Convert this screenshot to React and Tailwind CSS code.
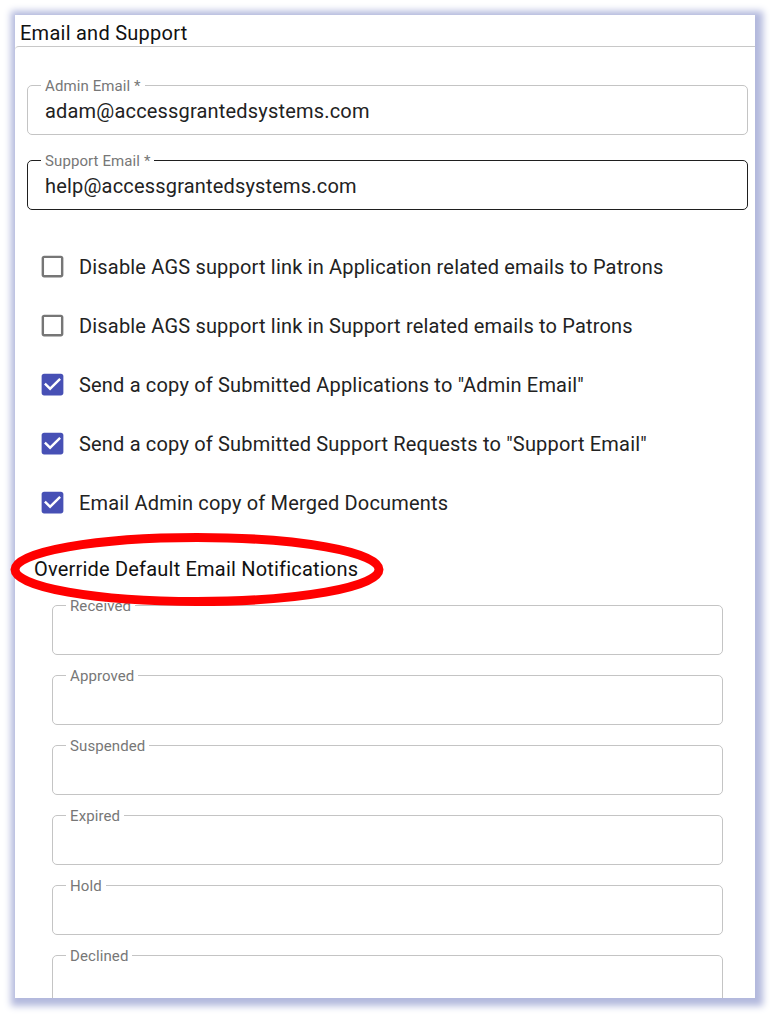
import React from 'react';

const font = { fontFamily: 'Roboto, "Liberation Sans", sans-serif' };

const checkedPath =
  'M19 3H5c-1.11 0-2 .9-2 2v14c0 1.1.89 2 2 2h14c1.11 0 2-.9 2-2V5c0-1.1-.89-2-2-2zm-9 14l-5-5 1.41-1.41L10 14.17l7.59-7.59L19 8l-9 9z';
const uncheckedPath =
  'M19 5v14H5V5h14m0-2H5c-1.1 0-2 .9-2 2v14c0 1.1.9 2 2 2h14c1.1 0 2-.9 2-2V5c0-1.1-.9-2-2-2z';

const options = [
  { label: 'Disable AGS support link in Application related emails to Patrons', checked: false },
  { label: 'Disable AGS support link in Support related emails to Patrons', checked: false },
  { label: 'Send a copy of Submitted Applications to "Admin Email"', checked: true },
  { label: 'Send a copy of Submitted Support Requests to "Support Email"', checked: true },
  { label: 'Email Admin copy of Merged Documents', checked: true },
];

const notifications = ['Received', 'Approved', 'Suspended', 'Expired', 'Hold', 'Declined'];

// outlined text field with the label sitting on the top border
const OutlinedField = ({ label, value, dark = false, className = '' }) => (
  <div
    className={`relative h-[50px] rounded-[5px] border ${dark ? 'border-[#1f1f1f]' : 'border-[#c4c4c4]'} ${className}`}
  >
    <span className="absolute left-[13px] top-0 -translate-y-1/2 bg-white px-[4px] text-[15px] leading-none tracking-[0.1px] text-[#777]">
      {label}
    </span>
    {value && (
      <div className="flex h-full items-center pl-[17px] pt-[1px] text-[20px] tracking-[0.18px] text-[#222]">{value}</div>
    )}
  </div>
);

const CheckRow = ({ label, checked }) => (
  <div className="flex h-[59px] items-center">
    <svg viewBox="0 0 24 24" className="ml-[23px] h-[29px] w-[29px] shrink-0">
      <path d={checked ? checkedPath : uncheckedPath} fill={checked ? '#4750b5' : '#767676'} />
    </svg>
    <span className="ml-[12px] text-[20px] tracking-[0.18px] text-[#222]">{label}</span>
  </div>
);

export default function App() {
  return (
    <div className="relative h-[1015px] w-[770px] overflow-hidden bg-white" style={font}>
      <div className="ml-[15px] mt-[15px] h-[983px] w-[740px] overflow-hidden bg-white shadow-[2px_2px_7px_6px_#b3b9dd]">
        <div className="flex h-[31px] items-end pb-[3px] pl-[5px] text-[20px] leading-none tracking-[0.25px] text-[#111]">
          Email and Support
        </div>
        <div className="rounded-tl-[4px] border-t border-[#c8c8c8] pb-[20px]">
          <div className="ml-[12px] mr-[7px] pt-[38px]">
            <OutlinedField label="Admin Email *" value="adam@accessgrantedsystems.com" />
            <OutlinedField label="Support Email *" value="help@accessgrantedsystems.com" dark className="mt-[25px]" />
          </div>

          <div className="mt-[27px]">
            {options.map((o) => (
              <CheckRow key={o.label} label={o.label} checked={o.checked} />
            ))}
          </div>

          <div className="flex h-[73px] items-center pt-[1px] pl-[19px] text-[20px] tracking-[0.2px] text-[#111]">
            Override Default Email Notifications
          </div>

          <div className="ml-[37px] mr-[32px] flex flex-col gap-[20px]">
            {notifications.map((n) => (
              <OutlinedField key={n} label={n} />
            ))}
          </div>
        </div>
      </div>

      {/* red highlight ellipse drawn over the page */}
      <svg className="pointer-events-none absolute left-[5px] top-[528px] h-[84px] w-[390px]" viewBox="0 0 390 84">
        <ellipse cx="192" cy="41.5" rx="182" ry="32" fill="none" stroke="#ff0000" strokeWidth="9" />
      </svg>
    </div>
  );
}
